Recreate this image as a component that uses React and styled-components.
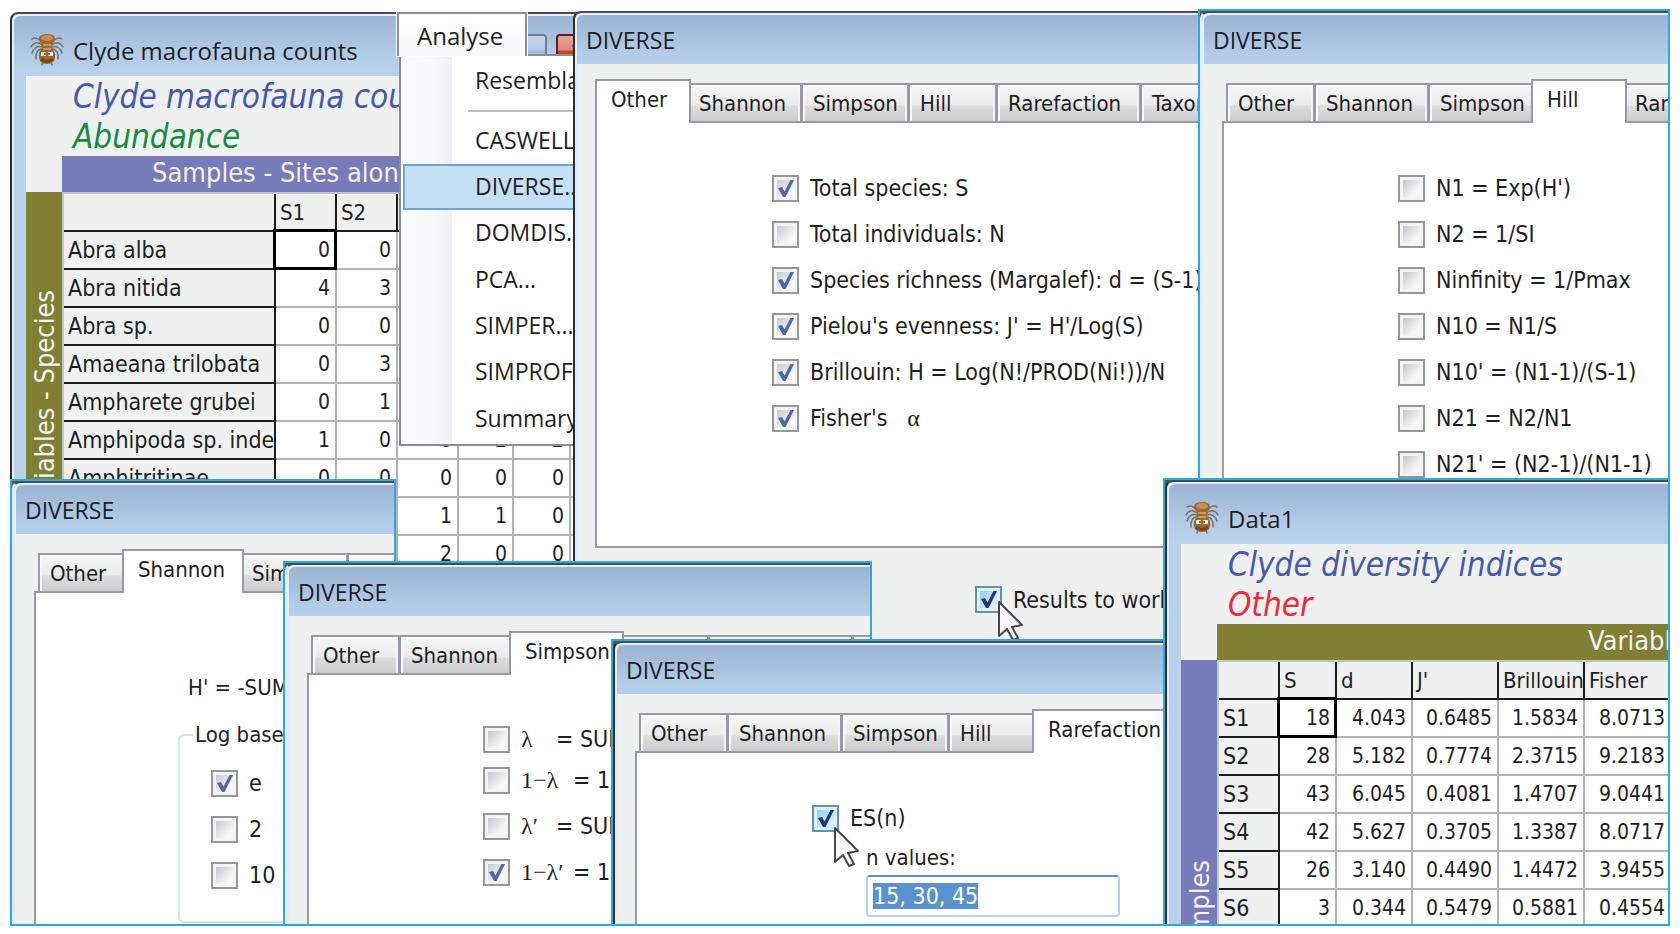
import React, { useEffect, useRef } from 'react';
import styled, { createGlobalStyle, css } from 'styled-components';

const GlobalStyle = createGlobalStyle`
    * {
        box-sizing: border-box;
    }
    body {
        margin: 0;
        background: #fff;
        color: #1e1e24;
        font-family: 'DejaVu Sans Condensed', 'DejaVu Sans', sans-serif;
        font-stretch: condensed;
        font-size: 22px;
    }
    button, input {
        font: inherit;
        color: inherit;
    }
`;

const titleFont = css`
    font-family: 'Open Sans', 'Noto Sans', sans-serif;
    font-size: 23px;
    font-stretch: normal;
`;

const Desktop = styled.main`
    position: relative;
    width: 100%;
    height: 100vh;
    overflow: hidden;
`;

/* ---------- window chrome ---------- */

const WindowBox = styled.section`
    position: absolute;
    top: ${p => p.$top}px;
    left: ${p => p.$left}px;
    ${p => p.$width && `width: ${p.$width}px;`}
    ${p => p.$height && `height: ${p.$height}px;`}
    ${p => p.$right && `right: ${p.$right}px;`}
    ${p => p.$bottom && `bottom: ${p.$bottom}px;`}
    border: 2px solid ${p => p.$outlined ? '#29abe2' : 'transparent'};
    display: flex;
    background: ${p => p.$outlined ? '#55585c' : 'none'};
`;
const Frame = styled.div`
    flex: 1;
    min-width: 0;
    display: flex;
    flex-direction: column;
    overflow: hidden;
    border-top: 2px solid #4a4c50;
    border-left: 2px solid ${p => p.$dark ? '#2b2c2e' : '#e4ecf6'};
    border-top-left-radius: 8px;
    background: linear-gradient(#9ab4d2, #a6c0dd 24px, #b0cae6 36px, #b9d1ea 58px);
    box-shadow: inset 2px 2px 0 #e6eef7;
    padding: 2px 0 0 2px;
`;
const TitleBar = styled.header`
    ${titleFont}
    flex: none;
    height: ${p => p.$tall ? 60 : 49}px;
    padding-left: ${p => p.$tall ? 16 : 9}px;
    padding-top: ${p => p.$tall ? 8 : 0}px;
    font-size: ${p => p.$tall ? 24 : 23}px;
    display: flex;
    align-items: center;
    gap: 9px;
    white-space: nowrap;
`;
const Title = styled.h2`
    flex: 1;
    margin: 0;
    font-size: inherit;
    font-weight: 400;
`;
const CaptionButton = styled.button`
    align-self: flex-start;
    margin-top: 10px;
    width: 50px;
    height: 36px;
    padding: 0;
    border: 2px solid ${p => p.$close ? '#5d1c28' : '#6a7f9c'};
    border-radius: 4px;
    color: #fff;
    background: ${p => p.$close
        ? 'linear-gradient(#e8a397, #dd8a7c 14px, #c2452b 15px, #c85a3e)'
        : 'linear-gradient(#c5d6ea, #b4cae4 14px, #a0bcdc 15px, #b5cde8)'};
`;

/* ---------- DIVERSE dialog ---------- */

const DialogBody = styled.div`
    flex: 1;
    min-height: 0;
    display: flex;
    flex-direction: column;
    padding: 15px 0 0 18px;
    background: #eff1f0;
`;
const TabList = styled.div`
    flex: none;
    display: flex;
    align-items: flex-end;
    height: 42px;
    padding-left: 4px;
`;
const Tab = styled.button`
    flex: none;
    width: ${p => p.$width}px;
    height: 38px;
    padding: 0 0 0 10px;
    border: solid #9a9aa6;
    border-width: 2px 1px 0 2px;
    background: linear-gradient(#f4f5f5, #ebebeb 20px, #dcdcdc 21px, #cdcdcd);
    box-shadow: inset 2px 2px 0 #fafafa, inset -2px 0 0 #f4f4f4;
    text-align: left;
    white-space: nowrap;

    &[aria-selected='true'] {
        position: relative;
        width: ${p => p.$width + 8}px;
        height: 44px;
        margin: 0 -4px -2px -4px;
        padding: 0 0 6px 14px;
        border-right-width: 2px;
        background: #fff;
        box-shadow: none;
    }
`;
const Panel = styled.div`
    flex: ${p => p.$height ? `0 0 ${p.$height}px` : 1};
    min-height: 0;
    min-width: 0;
    margin-right: ${p => p.$height ? 20 : 0}px;
    padding: ${p => p.$padding};
    border: solid #9a9aa6;
    border-width: ${p => p.$height ? '2px' : '2px 0 0 2px'};
    background: #fff;
    white-space: nowrap;
    overflow: hidden;
`;
const CheckList = styled.div`
    display: grid;
    grid-template-rows: ${p => p.$first || 46}px;
    grid-auto-rows: 46px;
`;
const CheckLabel = styled.label`
    display: flex;
    align-items: center;
    gap: 11px;
    font-size: 23px;
    white-space: nowrap;
`;
const CheckCell = styled.span`
    flex: none;
    display: grid;
    width: 27px;
    height: 27px;

    > * {
        grid-area: 1 / 1;
    }
`;
const CheckInput = styled.input`
    appearance: none;
    width: 27px;
    height: 27px;
    margin: 0;
    padding: 3px;
    border: 2px solid ${p => p.$hot ? '#5f94b0' : '#969898'};
    background:
        linear-gradient(135deg, ${p => p.$hot ? '#8fd0f4, #e6f5fd' : '#c4c8ce, #f7f7f7 75%'}) content-box,
        ${p => p.$hot ? '#dff1fa' : '#f3f4f4'};
`;
const Tick = styled.svg`
    pointer-events: none;
`;
const Symbol = styled.span`
    flex: none;
    font-family: 'Liberation Serif', serif;
    font-size: 24px;
    font-stretch: normal;
    width: ${p => p.$width}px;
`;
const SymbolLabel = styled.span`
    display: flex;
    align-items: center;
`;
const Formula = styled.p`
    margin: 0;
    padding-left: 10px;
    line-height: 30px;
`;
const LogBase = styled.fieldset`
    margin: 17px 0 0;
    width: 240px;
    height: 203px;
    padding: 10px 0 0 31px;
    border: 2px solid #d9e3ea;
    border-radius: 6px;
`;
const Legend = styled.legend`
    margin-left: -18px;
    padding: 0 2px;
    line-height: 30px;
`;
const Footer = styled.div`
    flex: 1;
    display: flex;
    align-items: center;
    padding: 0 0 16px 380px;
`;
const NValues = styled.div`
    display: flex;
    flex-direction: column;
    gap: 4px;
    padding: 4px 0 0 54px;
`;
const NLabel = styled.label`
    line-height: 26px;
`;
const NInput = styled.input`
    width: 254px;
    height: 42px;
    padding: 0 5px;
    font-size: 23px;
    border: 2px solid #b5d3ea;
    border-top-color: #5a92bd;
    border-radius: 4px;
    outline: none;
    background: #fff;

    &::selection {
        background: #5a92ce;
        color: #fff;
    }
`;
const Pointer = styled.svg`
    position: absolute;
    left: ${p => p.$left}px;
    top: ${p => p.$top}px;
`;

/* ---------- worksheet windows ---------- */

const SheetBody = styled.div`
    flex: 1;
    min-height: 0;
    margin-left: 12px;
    display: flex;
    flex-direction: column;
    background: #eff1f0;
    white-space: nowrap;
    overflow: hidden;
`;
const SheetHeadings = styled.div`
    flex: none;
    height: 80px;
    padding: 1px 0 0 47px;
    font-size: 33px;
    line-height: 40px;
    font-style: italic;
`;
const SheetHeading = styled.p`
    margin: 0;
    color: ${p => p.$color};
`;
const AxisBar = styled.div`
    flex: none;
    margin-left: 36px;
    padding-left: ${p => p.$indent}px;
    height: 36px;
    font-size: 27px;
    line-height: 34px;
    color: #f2f2f8;
    background: ${p => p.$color};
    overflow: hidden;
`;
const SheetMain = styled.div`
    flex: 1;
    min-height: 0;
    display: flex;
    align-items: flex-start;
`;
const AxisSide = styled.div`
    flex: none;
    align-self: stretch;
    width: 36px;
    padding-top: ${p => p.$offset}px;
    font-size: 27px;
    line-height: 38px;
    color: #f2f2f8;
    background: ${p => p.$color};

    span {
        display: block;
        writing-mode: vertical-rl;
        transform: rotate(180deg);
    }
`;
const Sheet = styled.table`
    flex: none;
    table-layout: fixed;
    width: ${p => p.$width}px;
    border-spacing: 0;
    border: solid #c4c6c6;
    border-width: 2px 0 0 2px;
    background: #fff;

    th, td {
        height: 38px;
        padding: 0;
        border: solid #b2b2b2;
        border-width: 0 2px 2px 0;
    }
    th {
        padding-left: 4px;
        font-weight: 400;
        text-align: left;
        background: #eff1f0;
        border-color: #1c1c1c;
        overflow: hidden;
    }
    tbody th {
        font-size: 23px;
    }
    td {
        padding-right: 5px;
        font-size: 21px;
        text-align: right;
    }
`;
const ActiveCell = styled.td`
    position: relative;

    &::after {
        content: '';
        position: absolute;
        inset: -3px -2px -2px -3px;
        border: 3px solid #000;
    }
`;

/* ---------- Analyse menu ---------- */

const Menu = styled.nav`
    ${titleFont}
    position: absolute;
    top: 12px;
    left: 397px;
    width: 190px;
`;
const MenuTitle = styled.button`
    position: relative;
    display: block;
    width: 130px;
    height: 44px;
    padding: 0 0 0 18px;
    border: 2px solid #8b8d90;
    border-bottom: 0;
    background: linear-gradient(#fff, #f7f9fa);
    box-shadow: 0 0 0 1px #fff;
    font-size: 24px;
    text-align: left;
`;
const MenuList = styled.div`
    display: flex;
    flex-direction: column;
    height: 392px;
    margin: -2px 0 0 2px;
    padding: 2px 0 2px 2px;
    border: 2px solid #8b8d90;
    background: linear-gradient(90deg, #fcfdfe, #f8f9fb 30px, #eff1f4) 2px 0 / 49px 100% no-repeat, #fff;
`;
const MenuItem = styled.button`
    flex: 1;
    padding: 0 0 2px 70px;
    border: 2px solid ${p => p.$active ? '#6ea3d8' : 'transparent'};
    background: ${p => p.$active ? '#c5e0f4' : 'none'};
    text-align: left;
    white-space: nowrap;
`;
const MenuRule = styled.hr`
    margin: 6px 0 5px 65px;
    width: 120px;
    border: 0;
    border-top: 2px solid #bcbec0;
`;

const tabs = [
    ['Other', 88],
    ['Shannon', 114],
    ['Simpson', 107],
    ['Hill', 88],
    ['Rarefaction', 144],
    ['Taxonomic', 130],
];

const otherIndices = [
    ['Total species: S', true],
    ['Total individuals: N', false],
    ['Species richness (Margalef): d = (S-1)/Log(N)', true],
    ["Pielou's evenness: J' = H'/Log(S)", true],
    ['Brillouin: H = Log(N!/PROD(Ni!))/N', true],
];

const hillNumbers = [
    "N1 = Exp(H')",
    'N2 = 1/SI',
    'Ninfinity = 1/Pmax',
    'N10 = N1/S',
    "N10' = (N1-1)/(S-1)",
    'N21 = N2/N1',
    "N21' = (N2-1)/(N1-1)",
];

const simpsonIndices = [
    ['λ', 35, '= SUM', false],
    ['1−λ', 52, '= 1', false],
    ['λ′', 35, '= SUM', false],
    ['1−λ′', 52, '= 1', true],
];

const countColumns = [212, 61, 61, 61, 55, 57, 61];
const counts = [
    ['Abra alba', 0, 0],
    ['Abra nitida', 4, 3],
    ['Abra sp.', 0, 0],
    ['Amaeana trilobata', 0, 3],
    ['Ampharete grubei', 0, 1],
    ['Amphipoda sp. indet', 1, 0, 0, 2, 2],
    ['Amphitritinae', 0, 0, 0, 0, 0],
    ['', '', '', 1, 1, 0],
    ['', '', '', 2, 0, 0],
];

const indexColumns = [61, 57, 76, 86, 86, 87];
const indexValues = [
    ['S1', '18', '4.043', '0.6485', '1.5834', '8.0713'],
    ['S2', '28', '5.182', '0.7774', '2.3715', '9.2183'],
    ['S3', '43', '6.045', '0.4081', '1.4707', '9.0441'],
    ['S4', '42', '5.627', '0.3705', '1.3387', '8.0717'],
    ['S5', '26', '3.140', '0.4490', '1.4472', '3.9455'],
    ['S6', '3', '0.344', '0.5479', '0.5881', '0.4554'],
];

const BugIcon = () => (
    <svg width="34" height="34" viewBox="0 0 34 34" fill="none" aria-hidden="true">
        <g stroke="#77706a" strokeWidth="1.4" strokeLinecap="round">
            <path d="M12 10C9 5 5 4 2 6" />
            <path d="M12 12C7 8 3 10 1 14" />
            <path d="M12 14C7 12 3 16 2 20" />
            <path d="M12 16C8 16 5 20 6 26" />
            <path d="M22 10C25 5 29 4 32 6" />
            <path d="M22 12C27 8 31 10 33 14" />
            <path d="M22 14C27 12 31 16 32 20" />
            <path d="M22 16C26 16 29 20 28 26" />
            <path d="M13 29L12 32M21 29L22 32" />
        </g>
        <path d="M9 5Q10 1 17 1Q24 1 25 5Q25 9 22 11L22 16Q26 19 25 25Q24 31 17 31Q10 31 9 25Q8 19 12 16L12 11Q9 9 9 5Z" fill="#a0672f" />
        <ellipse cx="17" cy="5" rx="6" ry="3" fill="#c68f57" />
        <path d="M13 12H21M13 16H21" stroke="#c9965c" strokeWidth="2" />
        <path d="M11 26Q17 31 23 26" stroke="#79451c" strokeWidth="3" />
        <rect x="11" y="19" width="5" height="4" rx="1" fill="#f4f0ea" />
        <rect x="18" y="19" width="5" height="4" rx="1" fill="#f4f0ea" />
        <rect x="14" y="20" width="2" height="2" fill="#7a6b58" />
        <rect x="18" y="20" width="2" height="2" fill="#7a6b58" />
    </svg>
);

const MousePointer = ({ left, top }) => (
    <Pointer $left={left} $top={top} width="28" height="42" viewBox="0 0 28 42" aria-hidden="true">
        <path d="M2 1V35L10 28L16 39L21 37L15 26L25 24Z" fill="#fafafa" stroke="#454556" strokeWidth="2" strokeLinejoin="round" />
    </Pointer>
);

const Check = ({ children, checked, hot }) => (
    <CheckLabel>
        <CheckCell>
            <CheckInput type="checkbox" defaultChecked={checked} $hot={hot} />
            {checked && (
                <Tick width="27" height="27" viewBox="0 0 27 27" aria-hidden="true">
                    <path d="M6 13L10 12L12.5 16.5L18.5 5L22 5L13.5 22L11 22Z" fill={hot ? '#25337a' : '#4d67a8'} />
                </Tick>
            )}
        </CheckCell>
        {children}
    </CheckLabel>
);

const Dialog = ({ selected, panelHeight, padding, dark, footer, children, ...place }) => (
    <WindowBox {...place}>
        <Frame $dark={dark}>
            <TitleBar><Title>DIVERSE</Title></TitleBar>
            <DialogBody>
                <TabList role="tablist">
                    {tabs.map(([name, width]) => (
                        <Tab key={name} type="button" role="tab" $width={width} aria-selected={name === selected}>{name}</Tab>
                    ))}
                </TabList>
                <Panel $height={panelHeight} $padding={padding}>{children}</Panel>
                {footer}
            </DialogBody>
        </Frame>
    </WindowBox>
);

const DataSheet = ({ columns, heads, rows }) => (
    <Sheet $width={columns.reduce((a, b) => a + b, 2)}>
        <colgroup>
            {columns.map((w, i) => <col key={i} style={{ width: w }} />)}
        </colgroup>
        <thead>
            <tr>{heads.map((h, i) => <th key={i} scope="col">{h}</th>)}</tr>
        </thead>
        <tbody>
            {rows.map((row, r) => (
                <tr key={r}>
                    <th scope="row">{row[0]}</th>
                    {columns.slice(1).map((w, c) => {
                        const Cell = r === 0 && c === 0 ? ActiveCell : 'td';
                        return <Cell key={c}>{row[c + 1]}</Cell>;
                    })}
                </tr>
            ))}
        </tbody>
    </Sheet>
);

const AnalyseMenu = () => (
    <Menu>
        <MenuTitle type="button">Analyse</MenuTitle>
        <MenuList>
            <MenuItem type="button">Resemblance...</MenuItem>
            <MenuRule />
            <MenuItem type="button">CASWELL...</MenuItem>
            <MenuItem type="button" $active>DIVERSE...</MenuItem>
            <MenuItem type="button">DOMDIS...</MenuItem>
            <MenuItem type="button">PCA...</MenuItem>
            <MenuItem type="button">SIMPER...</MenuItem>
            <MenuItem type="button">SIMPROF...</MenuItem>
            <MenuItem type="button">Summary Stats...</MenuItem>
        </MenuList>
    </Menu>
);

const App = () => {
    const nValues = useRef(null);

    useEffect(() => {
        nValues.current.focus({ preventScroll: true });
        nValues.current.select();
    }, []);

    return (
        <Desktop>
            <GlobalStyle />

            <WindowBox $left={8} $top={10} $width={600} $height={580}>
                <Frame $dark>
                    <TitleBar $tall>
                        <BugIcon />
                        <Title>Clyde macrofauna counts</Title>
                        <CaptionButton type="button" aria-label="Maximize" />
                        <CaptionButton type="button" aria-label="Close" $close>
                            <svg width="20" height="18" viewBox="0 0 20 18">
                                <path d="M2 2H7L10 6L13 2H18L13 9L18 16H13L10 12L7 16H2L7 9Z" fill="#fff" stroke="#5d4a55" strokeWidth="1.5" />
                            </svg>
                        </CaptionButton>
                    </TitleBar>
                    <SheetBody>
                        <SheetHeadings>
                            <SheetHeading $color="#4659ac">Clyde macrofauna counts</SheetHeading>
                            <SheetHeading $color="#178a45">Abundance</SheetHeading>
                        </SheetHeadings>
                        <AxisBar $color="#797ab9" $indent={90}>Samples - Sites along transect</AxisBar>
                        <SheetMain>
                            <AxisSide $color="#808033" $offset={98}><span>Variables - Species</span></AxisSide>
                            <DataSheet columns={countColumns} heads={['', 'S1', 'S2', '', '', '', '']} rows={counts} />
                        </SheetMain>
                    </SheetBody>
                </Frame>
            </WindowBox>

            <AnalyseMenu />

            <Dialog
                selected="Other"
                dark
                $left={571}
                $top={9}
                $width={680}
                $height={660}
                panelHeight={427}
                padding="42px 0 0 175px"
                footer={<Footer><Check checked hot>Results to worksheet</Check></Footer>}
            >
                <CheckList>
                    {otherIndices.map(([text, on]) => <Check key={text} checked={on}>{text}</Check>)}
                    <Check checked>
                        <SymbolLabel>Fisher's&nbsp;&nbsp;&nbsp;<Symbol>α</Symbol></SymbolLabel>
                    </Check>
                </CheckList>
            </Dialog>
            <MousePointer left={997} top={601} />

            <Dialog selected="Hill" $outlined $left={1198} $top={9} $right={10} $height={490} padding="42px 0 0 174px">
                <CheckList>
                    {hillNumbers.map(text => <Check key={text}>{text}</Check>)}
                </CheckList>
            </Dialog>

            <Dialog selected="Shannon" $outlined $left={10} $top={479} $width={386} $bottom={8} padding="80px 0 0 142px">
                <Formula>H' = -SUM</Formula>
                <LogBase>
                    <Legend>Log base</Legend>
                    <CheckList>
                        <Check checked>e</Check>
                        <Check>2</Check>
                        <Check>10</Check>
                    </CheckList>
                </LogBase>
            </Dialog>

            <Dialog selected="Simpson" $outlined $left={283} $top={561} $width={589} $bottom={8} padding="46px 0 0 174px">
                <CheckList $first={36}>
                    {simpsonIndices.map(([symbol, width, text, on]) => (
                        <Check key={symbol} checked={on}>
                            <SymbolLabel><Symbol $width={width}>{symbol}</Symbol>{text}</SymbolLabel>
                        </Check>
                    ))}
                </CheckList>
            </Dialog>

            <Dialog selected="Rarefaction" dark $outlined $left={611} $top={639} $width={570} $bottom={8} padding="42px 0 0 175px">
                <CheckList><Check checked hot>ES(n)</Check></CheckList>
                <NValues>
                    <NLabel htmlFor="n-values">n values:</NLabel>
                    <NInput id="n-values" ref={nValues} defaultValue="15, 30, 45" />
                </NValues>
            </Dialog>
            <MousePointer left={833} top={827} />

            <WindowBox $outlined $left={1163} $top={478} $right={10} $bottom={8}>
                <Frame $dark>
                    <TitleBar $tall>
                        <BugIcon />
                        <Title>Data1</Title>
                    </TitleBar>
                    <SheetBody>
                        <SheetHeadings>
                            <SheetHeading $color="#4659ac">Clyde diversity indices</SheetHeading>
                            <SheetHeading $color="#ee2a38">Other</SheetHeading>
                        </SheetHeadings>
                        <AxisBar $color="#808033" $indent={371}>Variables</AxisBar>
                        <SheetMain>
                            <AxisSide $color="#797ab9" $offset={200}><span>Samples</span></AxisSide>
                            <DataSheet columns={indexColumns} heads={['', 'S', 'd', "J'", 'Brillouin', 'Fisher']} rows={indexValues} />
                        </SheetMain>
                    </SheetBody>
                </Frame>
            </WindowBox>
        </Desktop>
    );
};

export default App;
